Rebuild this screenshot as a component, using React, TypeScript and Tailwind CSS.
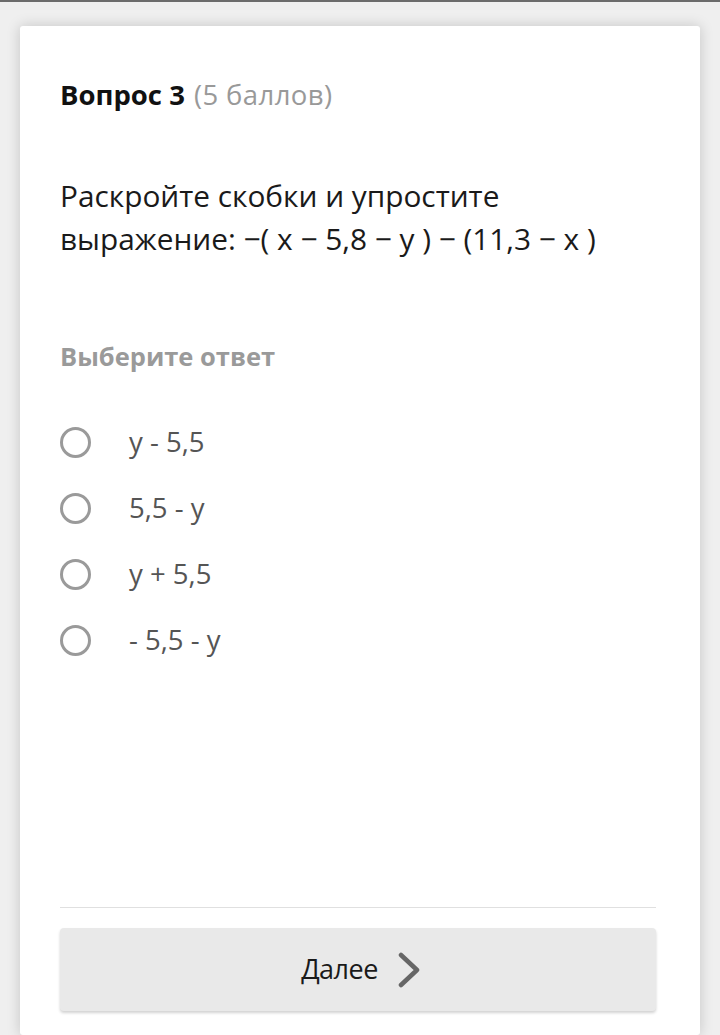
import React from 'react';

const options = ['y - 5,5', '5,5 - y', 'y + 5,5', '- 5,5 - y'];

const RadioRow: React.FC<{ label: string }> = ({ label }) => (
  <div className="flex items-center h-[66px]">
    <span className="w-[31px] h-[31px] rounded-full border-[3px] border-[#9a9a9a] shrink-0" />
    <span className="ml-[38px] text-[27.5px] leading-[36px] text-[#555]">{label}</span>
  </div>
);

export default function App() {
  return (
    <div
      className="min-h-[1035px] bg-[#efefef] border-t-2 border-[#6b6b6b] overflow-hidden"
      style={{ fontFamily: '"Open Sans", "Noto Sans", sans-serif' }}
    >
      <div className="mx-5 mt-[24px] h-[1009px] bg-white rounded-[3px] shadow-[0_0_14px_rgba(0,0,0,0.18)] pl-[40px] pr-[44px] pt-[50px] pb-[24px] flex flex-col">
        <div className="text-[27.5px] leading-[38px]">
          <span className="font-bold text-[#111]">Вопрос 3</span>
          <span className="ml-[9px] text-[#999] tracking-[0.4px]">(5 баллов)</span>
        </div>

        <p className="mt-[60px] text-[29.8px] leading-[43px] text-[#1a1a1a]">
          Раскройте скобки и упростите
          <br />
          выражение: −( x − 5,8 − y ) − (11,3 − x )
        </p>

        <div className="mt-[80px] text-[25.5px] leading-[32px] font-bold text-[#9a9a9a]">
          Выберите ответ
        </div>

        <div className="mt-[37px] flex flex-col">
          {options.map((o) => (
            <RadioRow key={o} label={o} />
          ))}
        </div>

        <div className="mt-auto h-px bg-[#e0e0e0]" />

        <button className="mt-[20px] h-[83px] w-full rounded-[4px] bg-[#e9e9e9] shadow-[0_2px_3px_rgba(0,0,0,0.18)] flex items-center justify-center gap-[19px] pl-[6px]">
          <span className="text-[27px] text-[#1a1a1a] tracking-[-0.5px]">Далее</span>
          <svg width="24" height="36" viewBox="0 0 24 36" fill="none">
            <path d="M4 3 L20 18 L4 33" stroke="#666" strokeWidth="4.5" strokeLinecap="round" strokeLinejoin="round" />
          </svg>
        </button>
      </div>
    </div>
  );
}
